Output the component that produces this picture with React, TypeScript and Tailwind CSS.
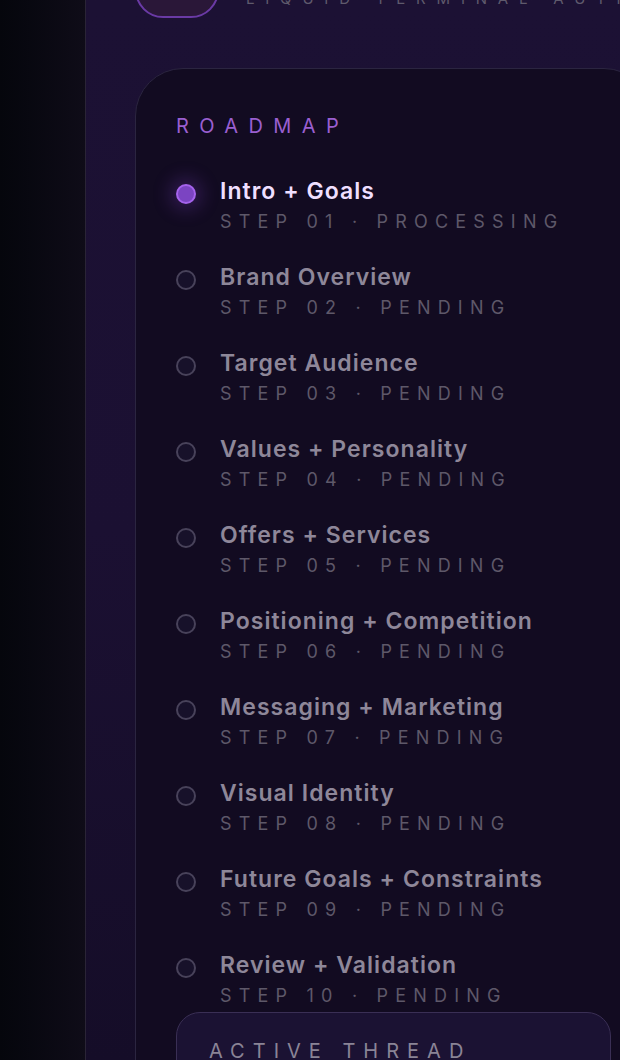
const steps = [
  "Intro + Goals",
  "Brand Overview",
  "Target Audience",
  "Values + Personality",
  "Offers + Services",
  "Positioning + Competition",
  "Messaging + Marketing",
  "Visual Identity",
  "Future Goals + Constraints",
  "Review + Validation",
];

export default function App() {
  return (
    <div
      className="flex h-[1060px] w-full overflow-hidden bg-[#07070d]"
      style={{ fontFamily: "Inter, 'Noto Sans', sans-serif" }}
    >
      <div className="w-[85px] shrink-0 bg-gradient-to-r from-[#05060c] to-[#0f0c18]" />
      <aside className="relative flex flex-1 flex-col border-l border-[#2a2436] bg-gradient-to-b from-[#1c1134] via-[#1b1032] to-[#150d28] pl-[49px]">
        <div className="-mt-[66px] flex items-end gap-[27px]">
          <div className="h-[84px] w-[84px] shrink-0 rounded-[28px] border-2 border-[#6a3aa5] bg-[#2a1738]" />
          <div className="mb-[8px] flex flex-col whitespace-nowrap">
            <span className="text-[22px] font-semibold text-[#e9dcff]">Brand Brain</span>
            <span className="text-[15px] uppercase tracking-[0.72em] text-[#5f5a6c]">
              Liquid Terminal Authority
            </span>
          </div>
        </div>

        <section className="mt-[50px] w-[517px] shrink-0 rounded-[48px] border border-[#2b2540] bg-[#120b21] px-10 pt-[43px]">
          <h2 className="text-[20px] leading-[28px] uppercase tracking-[0.52em] text-[#9a5fd0]">
            Roadmap
          </h2>
          <ul className="mt-[35px] flex flex-col gap-[27px]">
            {steps.map((s, i) => {
              const active = i === 0;
              const num = String(i + 1).padStart(2, "0");
              return (
                <li key={s} className="flex items-start gap-6">
                  {active ? (
                    <span className="mt-[9px] h-5 w-5 shrink-0 rounded-full border-2 border-[#a563ec] bg-[#7b44c2] shadow-[0_0_18px_6px_rgba(140,70,220,0.25)]" />
                  ) : (
                    <span className="mt-[9px] h-5 w-5 shrink-0 rounded-full border-2 border-[#48425a] bg-[#17112a]" />
                  )}
                  <div className="flex flex-col whitespace-nowrap">
                    <span
                      className={
                        active
                          ? "text-[23px] leading-[32px] font-semibold tracking-[0.045em] text-[#efdfff]"
                          : "text-[23px] leading-[32px] font-semibold tracking-[0.045em] text-[#8e8799]"
                      }
                    >
                      {s}
                    </span>
                    <span className="mt-[3px] text-[18px] leading-[24px] uppercase tracking-[0.4em] text-[#5e5869]">
                      Step {num} · {active ? "Processing" : "Pending"}
                    </span>
                  </div>
                </li>
              );
            })}
          </ul>
          <div className="mt-[4px] h-[200px] rounded-3xl border border-[#3a2f55] bg-[#1b1233] px-8 pt-6">
            <span className="text-[20px] leading-[28px] uppercase tracking-[0.4em] text-[#8a8496]">
              Active Thread
            </span>
          </div>
        </section>
      </aside>
    </div>
  );
}
